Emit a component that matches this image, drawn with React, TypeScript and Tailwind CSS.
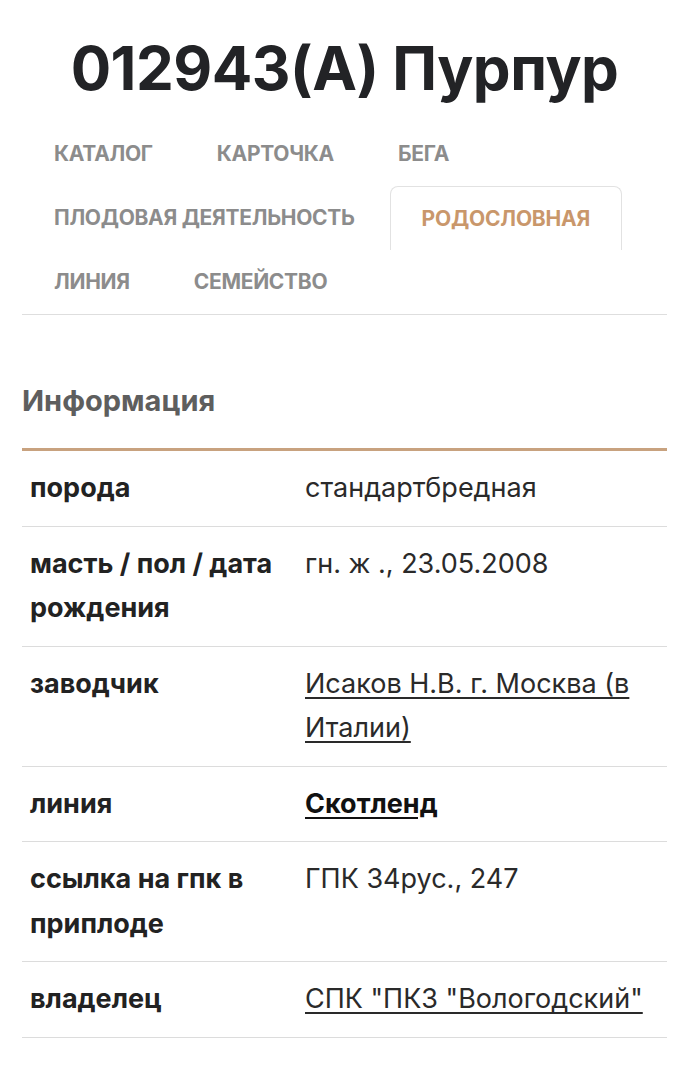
const TABS: { label: string; active?: boolean }[][] = [
  [{ label: "КАТАЛОГ" }, { label: "КАРТОЧКА" }, { label: "БЕГА" }],
  [{ label: "ПЛОДОВАЯ ДЕЯТЕЛЬНОСТЬ" }, { label: "РОДОСЛОВНАЯ", active: true }],
  [{ label: "ЛИНИЯ" }, { label: "СЕМЕЙСТВО" }],
];

type Row = { label: string; value: string; kind?: "link" | "strong" };

const ROWS: Row[] = [
  { label: "порода", value: "стандартбредная" },
  { label: "масть / пол / дата рождения", value: "гн. ж ., 23.05.2008" },
  { label: "заводчик", value: "Исаков Н.В. г. Москва (в Италии)", kind: "link" },
  { label: "линия", value: "Скотленд", kind: "strong" },
  { label: "ссылка на гпк в приплоде", value: "ГПК 34рус., 247" },
  { label: "владелец", value: 'СПК "ПКЗ "Вологодский"', kind: "link" },
];

export default function App() {
  return (
    <div className="min-h-screen bg-white px-[22px] font-['Inter',sans-serif] text-[#222]">
      <h1 className="pt-[26px] text-center text-[60px] leading-[84px] font-bold tracking-[-0.5px] text-[#222326]">
        012943(A) Пурпур
      </h1>

      <nav className="mt-[12px] border-b border-[#dedede]">
        {TABS.map((row, i) => (
          <div key={i} className="flex">
            {row.map((t) =>
              t.active ? (
                <span
                  key={t.label}
                  className="h-[64px] flex items-center px-[31px] ml-[3px] border border-b-0 border-[#e2e2e2] rounded-t-[8px] text-[21px] font-bold tracking-[-0.2px] text-[#c9976b]"
                >
                  {t.label}
                </span>
              ) : (
                <span
                  key={t.label}
                  className="h-[64px] flex items-center px-[32px] text-[21px] font-bold tracking-[-0.3px] text-[#8c8c8c]"
                >
                  {t.label}
                </span>
              )
            )}
          </div>
        ))}
      </nav>

      <h2 className="mt-[68px] text-[29px] leading-[36px] font-bold text-[#5e5e5e]">Информация</h2>

      <table className="mt-[29px] w-full border-t-[3px] border-[#c8a27f] border-collapse">
        <tbody>
          {ROWS.map((r) => (
            <tr key={r.label} className="border-b border-[#dcdcdc]">
              <td className="w-[283px] align-top pl-[8px] pr-[10px] py-[15px] text-[27px] leading-[44.5px] font-bold text-[#222]">
                {r.label}
              </td>
              <td className="align-top pr-[6px] py-[15px] text-[27px] leading-[44.5px] text-[#2a2a2a]">
                {r.kind === "link" ? (
                  <a className="underline underline-offset-[4px] decoration-[1.5px]">{r.value}</a>
                ) : r.kind === "strong" ? (
                  <a className="underline underline-offset-[4px] decoration-[1.5px] font-bold text-[#111]">{r.value}</a>
                ) : (
                  r.value
                )}
              </td>
            </tr>
          ))}
        </tbody>
      </table>
    </div>
  );
}
